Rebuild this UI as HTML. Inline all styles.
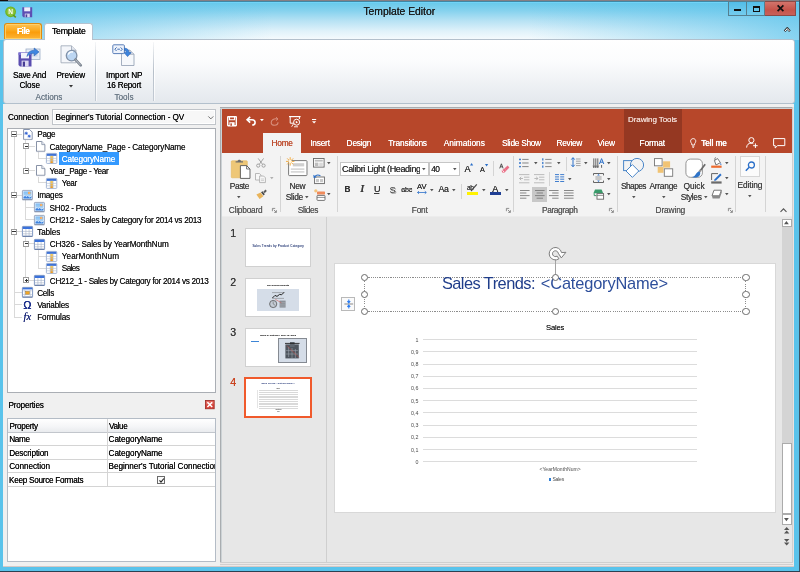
<!DOCTYPE html>
<html>
<head>
<meta charset="utf-8">
<title>Template Editor</title>
<style>
*{box-sizing:border-box;margin:0;padding:0}
html,body{width:800px;height:572px;overflow:hidden}
body{position:relative;font-family:"Liberation Sans",sans-serif;font-size:8.6px;color:#1e1e1e;background:#5ac3eb}
.a{position:absolute}
.t{position:absolute;white-space:pre;text-shadow:0 0 0.6px}
svg{overflow:visible}
#root{position:absolute;left:0;top:0;width:800px;height:572px;will-change:transform}
</style>
</head>
<body>
<div id="root">
<div class="a" style="left:0px;top:0px;width:800px;height:40px;background:linear-gradient(90deg,rgba(90,195,235,0.7) 0,rgba(90,195,235,0.45) 10%,rgba(90,195,235,0) 34%,rgba(90,195,235,0) 66%,rgba(90,195,235,0.45) 90%,rgba(90,195,235,0.7) 100%),linear-gradient(#66c8eb 0,#6acaeb 8%,#86d2ee 27%,#b7e2f4 52%,#e0f2fa 78%,#f4fafd 97%)"></div>
<div class="a" style="left:0px;top:0px;width:800px;height:1px;background:#857f84"></div>
<div class="a" style="left:0px;top:1px;width:800px;height:0.8px;background:#3f88a6"></div>
<div class="a" style="left:0px;top:1.8px;width:800px;height:1px;background:#70d4f8"></div>
<div class="a" style="left:0px;top:0px;width:8px;height:1px;background:#1a0c08"></div>
<div class="t" style="left:363.4px;top:5px;font-size:10.4px;line-height:14px;letter-spacing:-0.031px;color:#1b1b1b;">Template Editor</div>
<div class="a" style="left:727.5px;top:0.5px;width:19.5px;height:15px;border:1px solid #557f90;background:linear-gradient(#52bde8,#74ccee)"></div>
<div class="a" style="left:746px;top:0.5px;width:19px;height:15px;border:1px solid #557f90;background:linear-gradient(#52bde8,#74ccee)"></div>
<div class="a" style="left:764.5px;top:0.5px;width:31px;height:15px;border:1px solid #8c4a46;border-left:0;background:linear-gradient(#d2746b,#c6544b 60%,#c9605a)"></div>
<div class="a" style="left:734px;top:8.5px;width:7px;height:2px;background:#111"></div>
<div class="a" style="left:752.5px;top:5.5px;width:7px;height:6px;border:1.2px solid #111;border-top-width:2px"></div>
<svg class="a" style="left:776.5px;top:5px" width="7" height="6.4" viewBox="0 0 7 6.4"><path d="M0.6 0.3L6.4 6.1M6.4 0.3L0.6 6.1" stroke="#111" stroke-width="1.7" fill="none"/></svg>
<svg class="a" style="left:783.5px;top:27px" width="6.5" height="5.5" viewBox="0 0 6.5 5.5"><path d="M0.6 4.3L3.25 1.2L5.9 4.3" stroke="#333" stroke-width="2.2" fill="none" stroke-linejoin="round"/><path d="M1 4.1L3.25 1.6L5.5 4.1" stroke="#fff" stroke-width="1" fill="none"/></svg>
<svg class="a" style="left:5px;top:5.5px" width="12" height="12" viewBox="0 0 12 12"><circle cx="5.6" cy="5.8" r="5.4" fill="#6fb31f"/><circle cx="5.6" cy="5.8" r="4.2" fill="#8ac43a"/><path d="M8.2 9.2L10.8 11.4" stroke="#5e9a1a" stroke-width="1.6"/><text x="5.6" y="8.3" font-size="6.6" font-weight="bold" fill="#fff" text-anchor="middle" font-family="Liberation Sans, sans-serif">N</text></svg>
<svg class="a" style="left:22.4px;top:6.6px" width="10.5" height="10.5" viewBox="0 0 10.5 10.5"><path d="M0.3 0.3H10.2V10.2H1.4L0.3 9.1Z" fill="#5d4fb3"/><rect x="2.2" y="0.3" width="6" height="4" fill="#efeefa"/><rect x="2.8" y="6.6" width="5" height="3.6" fill="#d9d6f0"/><rect x="3.6" y="7.4" width="1.6" height="2.8" fill="#4a3f98"/></svg>
<div class="a" style="left:4.3px;top:23.2px;width:37.4px;height:15.6px;border:1px solid #e08c0e;border-bottom:0;border-radius:3px 3px 0 0;background:linear-gradient(#fdc252 0,#fbab22 40%,#fa9d0c 55%,#fcb436 100%);box-shadow:inset 0 0 0 1px rgba(255,215,120,0.75)"></div>
<div class="t" style="left:17px;top:25.7px;font-size:8.4px;line-height:11px;letter-spacing:-0.518px;color:#fff;font-weight:bold;">File</div>
<div class="a" style="left:44.2px;top:23.4px;width:49.2px;height:16.6px;border:1px solid #b4c3d1;border-bottom:0;border-radius:3px 3px 0 0;background:#fff"></div>
<div class="t" style="left:51.9px;top:26px;font-size:8.8px;line-height:11px;letter-spacing:-0.251px;color:#0c0c0c;">Template</div>
<div class="a" style="left:3px;top:38.5px;width:792.2px;height:65.9px;border:1px solid #b3c0cc;border-radius:3px;background:linear-gradient(#ffffff 0,#fbfcfd 35%,#eef1f4 70%,#e4e8ed 100%)"></div>
<div class="a" style="left:45.2px;top:38.2px;width:47.2px;height:1.6px;background:#fff"></div>
<div class="a" style="left:95px;top:42px;width:1px;height:59px;background:linear-gradient(rgba(170,180,192,0.1),#b6bfc9 50%,rgba(170,180,192,0.6))"></div>
<div class="a" style="left:96px;top:42px;width:1px;height:59px;background:linear-gradient(rgba(255,255,255,0.2),#fff 50%,rgba(255,255,255,0.6))"></div>
<div class="a" style="left:153px;top:42px;width:1px;height:59px;background:linear-gradient(rgba(170,180,192,0.1),#b6bfc9 50%,rgba(170,180,192,0.6))"></div>
<div class="a" style="left:154px;top:42px;width:1px;height:59px;background:linear-gradient(rgba(255,255,255,0.2),#fff 50%,rgba(255,255,255,0.6))"></div>
<div class="t" style="left:13px;top:69.5px;font-size:8.2px;line-height:11px;letter-spacing:-0.263px;color:#0c0c0c;">Save And</div>
<div class="t" style="left:19.5px;top:79.8px;font-size:8.2px;line-height:11px;letter-spacing:-0.093px;color:#0c0c0c;">Close</div>
<div class="t" style="left:56.5px;top:69.5px;font-size:8.2px;line-height:11px;letter-spacing:-0.095px;color:#0c0c0c;">Preview</div>
<svg class="a" style="left:68.7px;top:84.6px" width="4" height="2.4" viewBox="0 0 4 2.4"><path d="M0 0H4L2 2.4Z" fill="#333"/></svg>
<div class="t" style="left:106px;top:69.5px;font-size:8.2px;line-height:11px;letter-spacing:-0.045px;color:#0c0c0c;">Import NP</div>
<div class="t" style="left:107px;top:79.8px;font-size:8.2px;line-height:11px;letter-spacing:-0.224px;color:#0c0c0c;">16 Report</div>
<div class="t" style="left:35.5px;top:91.8px;font-size:8.2px;line-height:11px;letter-spacing:0.016px;color:#6d7b88;">Actions</div>
<div class="t" style="left:114.5px;top:91.8px;font-size:8.2px;line-height:11px;letter-spacing:-0.029px;color:#6d7b88;">Tools</div>
<svg class="a" style="left:18px;top:46.5px" width="23" height="20" viewBox="0 0 23 20"><rect x="8" y="2" width="14" height="10.5" fill="#e9edf5" stroke="#9fb0c8" stroke-width="0.8"/>
<rect x="10.5" y="4.5" width="9" height="5" fill="#c9d6ea"/>
<path d="M0.5 5.5H13.5V19.5H2L0.5 18Z" fill="#5a4db0"/>
<path d="M0.5 5.5H13.5V8H0.5Z" fill="#7a6fd0"/>
<rect x="3" y="5.8" width="8" height="5.6" fill="#f4f3fb"/>
<rect x="3.6" y="13.6" width="7" height="5.9" fill="#dcd9f1"/>
<rect x="4.8" y="14.6" width="2.2" height="4.9" fill="#463b94"/>
<path d="M9 9.5C9.5 5 13 3.2 16.2 3.4V1L21 4.9L16.2 8.8V6.4C13.5 6.2 10.8 7 9 9.5Z" fill="#3f86e0" stroke="#2a62b4" stroke-width="0.6"/></svg>
<svg class="a" style="left:60px;top:44.5px" width="23" height="23" viewBox="0 0 23 23"><path d="M1 0.8H11.5L16 5.3V17.8H1Z" fill="#f4f6fa" stroke="#9aa4b4" stroke-width="0.8"/>
<path d="M11.5 0.8V5.3H16" fill="#e2e6ee" stroke="#9aa4b4" stroke-width="0.8"/>
<circle cx="11.6" cy="10.6" r="5.3" fill="#bcd6f2" stroke="#8091a8" stroke-width="1.3"/>
<path d="M8.3 9.6C9 7.6 11 6.6 13 7" stroke="#fff" stroke-width="1.3" fill="none"/>
<path d="M15.4 14.6L20.8 20.4" stroke="#77808c" stroke-width="2.6" stroke-linecap="round"/>
<path d="M15.6 14.8L20.4 20" stroke="#c9ced6" stroke-width="0.9" stroke-linecap="round"/></svg>
<svg class="a" style="left:112px;top:43.5px" width="23" height="23" viewBox="0 0 23 23"><path d="M9.5 6.2H18L22 10.2V21.5H9.5Z" fill="#f6f8fb" stroke="#8e9cb0" stroke-width="0.8"/>
<path d="M18 6.2V10.2H22" fill="#dfe5ee" stroke="#8e9cb0" stroke-width="0.8"/>
<rect x="0.8" y="0.8" width="11.6" height="8.8" rx="1" fill="#eef3fb" stroke="#5b7fb9" stroke-width="1"/>
<path d="M4.6 3.4L2.8 5.2L4.6 7M8.6 3.4L10.4 5.2L8.6 7M5.3 5.2H7.9" stroke="#2f5fa8" stroke-width="0.9" fill="none"/>
<path d="M12.6 4.2C15.4 4.2 17 6 17 8.6H19.2L15.6 12.6L12 8.6H14.2C14.2 7.2 13.6 6.6 12.6 6.6Z" fill="#3c84dd" stroke="#2861b2" stroke-width="0.6"/></svg>
<div class="a" style="left:3.3px;top:104px;width:791px;height:462.5px;background:#f0f0f0"></div>
<div class="t" style="left:8px;top:111.5px;font-size:8.2px;line-height:11px;letter-spacing:-0.069px;color:#0c0c0c;">Connection</div>
<div class="a" style="left:52.4px;top:109.2px;width:163.5px;height:15.4px;background:#f7f7f7;border:1px solid #c0c4c9;box-shadow:inset 0 0 0 1px #fff"></div>
<div class="t" style="left:55.5px;top:111.5px;font-size:8.2px;line-height:11px;letter-spacing:-0.045px;color:#0c0c0c;">Beginner's Tutorial Connection - QV</div>
<svg class="a" style="left:207.8px;top:115.8px" width="5.6" height="3.4" viewBox="0 0 5.6 3.4"><path d="M0.3 0.4L2.8 2.9L5.3 0.4" stroke="#606060" stroke-width="0.9" fill="none"/></svg>
<div class="a" style="left:6.5px;top:127.5px;width:209.4px;height:265.8px;background:#fff;border:1px solid #aaaeb4"></div>
<div class="a" style="left:13.6px;top:134.2px;width:1px;height:182.85px;background:#d9d9d9"></div>
<div class="a" style="left:13.6px;top:133.7px;width:8.4px;height:1px;background:#d9d9d9"></div>
<div class="a" style="left:13.6px;top:194.65px;width:8.4px;height:1px;background:#d9d9d9"></div>
<div class="a" style="left:13.6px;top:231.22px;width:8.4px;height:1px;background:#d9d9d9"></div>
<div class="a" style="left:13.6px;top:292.17px;width:8.4px;height:1px;background:#d9d9d9"></div>
<div class="a" style="left:13.6px;top:304.36px;width:8.4px;height:1px;background:#d9d9d9"></div>
<div class="a" style="left:13.6px;top:316.55px;width:8.4px;height:1px;background:#d9d9d9"></div>
<div class="a" style="left:25px;top:139.2px;width:1px;height:31.57px;background:#d9d9d9"></div>
<div class="a" style="left:25px;top:145.89px;width:10px;height:1px;background:#d9d9d9"></div>
<div class="a" style="left:25px;top:170.27px;width:10px;height:1px;background:#d9d9d9"></div>
<div class="a" style="left:38px;top:152.39px;width:1px;height:6.19px;background:#d9d9d9"></div>
<div class="a" style="left:38px;top:158.08px;width:8.5px;height:1px;background:#d9d9d9"></div>
<div class="a" style="left:38px;top:176.77px;width:1px;height:6.19px;background:#d9d9d9"></div>
<div class="a" style="left:38px;top:182.46px;width:8.5px;height:1px;background:#d9d9d9"></div>
<div class="a" style="left:25px;top:200.15px;width:1px;height:19.38px;background:#d9d9d9"></div>
<div class="a" style="left:25px;top:206.84px;width:10px;height:1px;background:#d9d9d9"></div>
<div class="a" style="left:25px;top:219.03px;width:10px;height:1px;background:#d9d9d9"></div>
<div class="a" style="left:25px;top:236.72px;width:1px;height:43.76px;background:#d9d9d9"></div>
<div class="a" style="left:25px;top:243.41px;width:10px;height:1px;background:#d9d9d9"></div>
<div class="a" style="left:25px;top:279.98px;width:10px;height:1px;background:#d9d9d9"></div>
<div class="a" style="left:38px;top:249.91px;width:1px;height:18.38px;background:#d9d9d9"></div>
<div class="a" style="left:38px;top:255.6px;width:8.5px;height:1px;background:#d9d9d9"></div>
<div class="a" style="left:38px;top:267.79px;width:8.5px;height:1px;background:#d9d9d9"></div>
<div class="a" style="left:59px;top:152.38px;width:59.5px;height:12.4px;background:#3399ff"></div>
<div class="a" style="left:11.05px;top:131.2px;width:6px;height:6px;background:#fff;border:1px solid #9c9c9c"></div>
<div class="a" style="left:12.35px;top:133.75px;width:3.4px;height:0.9px;background:#333"></div>
<svg class="a" style="left:23.2px;top:128.8px" width="9.8" height="11" viewBox="0 0 9.8 11"><path d="M0.6 0.5H6.6L9.2 3.1V10.4H0.6Z" fill="#fff" stroke="#7a89a6" stroke-width="0.9"/><path d="M0.8 10.6H9.2" stroke="#b0b8c8" stroke-width="0.6"/><path d="M3.2 2.6V6M1.5 4.3H4.9M2 3.1L4.4 5.5M4.4 3.1L2 5.5" stroke="#2458d0" stroke-width="0.7"/><path d="M6.2 5.6V8.8M4.6 7.2H7.8M5.1 6.1L7.3 8.3M7.3 6.1L5.1 8.3" stroke="#2458d0" stroke-width="0.7"/></svg>
<div class="t" style="left:37.2px;top:129.4px;font-size:8.2px;line-height:11px;letter-spacing:-0.263px;color:#1e1e1e;">Page</div>
<div class="a" style="left:23.2px;top:143.39px;width:6px;height:6px;background:#fff;border:1px solid #9c9c9c"></div>
<div class="a" style="left:24.5px;top:145.94px;width:3.4px;height:0.9px;background:#333"></div>
<svg class="a" style="left:35.8px;top:140.79px" width="9.4" height="11" viewBox="0 0 9.4 11"><path d="M0.5 0.5H5.8L8.9 3.6V10.3H0.5Z" fill="#fff" stroke="#7a869c" stroke-width="0.9"/><path d="M5.8 0.5V3.6H8.9" fill="#e4e8f0" stroke="#7a869c" stroke-width="0.7"/><path d="M0.6 10.7H8.9" stroke="#b8c0cc" stroke-width="0.6"/></svg>
<div class="t" style="left:49.6px;top:141.59px;font-size:8.2px;line-height:11px;letter-spacing:-0.165px;color:#1e1e1e;">CategoryName_Page - CategoryName</div>
<svg class="a" style="left:46.4px;top:153.28px" width="11.2" height="10.8" viewBox="0 0 11.2 10.8"><defs><linearGradient id="gcol" x1="0" y1="0" x2="0" y2="1"><stop offset="0" stop-color="#f8d060"/><stop offset="1" stop-color="#f0981a"/></linearGradient></defs><rect x="0.4" y="0.4" width="10.4" height="10" rx="0.8" fill="#fff" stroke="#8fa3c8" stroke-width="0.8"/><path d="M0.8 0.8H10.4V2.9H0.8Z" fill="#3f73d6"/><rect x="4.2" y="2.9" width="2.9" height="7.2" fill="url(#gcol)"/><path d="M4.2 2.9V10.2M7.1 2.9V10.2M0.8 5.4H10.4M0.8 7.8H10.4" stroke="#b4bed0" stroke-width="0.6" fill="none"/></svg>
<div class="t" style="left:61.8px;top:153.78px;font-size:8.2px;line-height:11px;letter-spacing:-0.146px;color:#fff;">CategoryName</div>
<div class="a" style="left:23.2px;top:167.77px;width:6px;height:6px;background:#fff;border:1px solid #9c9c9c"></div>
<div class="a" style="left:24.5px;top:170.32px;width:3.4px;height:0.9px;background:#333"></div>
<svg class="a" style="left:35.8px;top:165.17px" width="9.4" height="11" viewBox="0 0 9.4 11"><path d="M0.5 0.5H5.8L8.9 3.6V10.3H0.5Z" fill="#fff" stroke="#7a869c" stroke-width="0.9"/><path d="M5.8 0.5V3.6H8.9" fill="#e4e8f0" stroke="#7a869c" stroke-width="0.7"/><path d="M0.6 10.7H8.9" stroke="#b8c0cc" stroke-width="0.6"/></svg>
<div class="t" style="left:49.6px;top:165.97px;font-size:8.2px;line-height:11px;letter-spacing:-0.312px;color:#1e1e1e;">Year_Page - Year</div>
<svg class="a" style="left:46.4px;top:177.66px" width="11.2" height="10.8" viewBox="0 0 11.2 10.8"><defs><linearGradient id="gcol" x1="0" y1="0" x2="0" y2="1"><stop offset="0" stop-color="#f8d060"/><stop offset="1" stop-color="#f0981a"/></linearGradient></defs><rect x="0.4" y="0.4" width="10.4" height="10" rx="0.8" fill="#fff" stroke="#8fa3c8" stroke-width="0.8"/><path d="M0.8 0.8H10.4V2.9H0.8Z" fill="#3f73d6"/><rect x="4.2" y="2.9" width="2.9" height="7.2" fill="url(#gcol)"/><path d="M4.2 2.9V10.2M7.1 2.9V10.2M0.8 5.4H10.4M0.8 7.8H10.4" stroke="#b4bed0" stroke-width="0.6" fill="none"/></svg>
<div class="t" style="left:61.8px;top:178.16px;font-size:8.2px;line-height:11px;letter-spacing:-0.342px;color:#1e1e1e;">Year</div>
<div class="a" style="left:11.05px;top:192.15px;width:6px;height:6px;background:#fff;border:1px solid #9c9c9c"></div>
<div class="a" style="left:12.35px;top:194.7px;width:3.4px;height:0.9px;background:#333"></div>
<svg class="a" style="left:21.9px;top:190.15px" width="10.8" height="10.2" viewBox="0 0 10.8 10.2"><defs><linearGradient id="gsky" x1="0" y1="0" x2="0" y2="1"><stop offset="0" stop-color="#7fbcf2"/><stop offset="1" stop-color="#c4e2fa"/></linearGradient></defs><rect x="0.4" y="0.4" width="10" height="9.2" rx="0.6" fill="#f2f6fb" stroke="#8796b2" stroke-width="0.8"/><path d="M0.4 9.8H10.4" stroke="#6f7f9e" stroke-width="0.7"/><rect x="1.4" y="1.4" width="8" height="7.2" fill="url(#gsky)"/><circle cx="7.2" cy="3" r="1.3" fill="#f7a04a"/><circle cx="7.2" cy="3" r="0.6" fill="#fde3b8"/><path d="M1.4 7L3 5.4L4.4 6.8L5.8 5.6L7.4 7.2L9.4 6V8.6H1.4Z" fill="#3c82e0"/><path d="M1.4 7L3 5.4L4.4 6.8L5.8 5.6L7.4 7.2L9.4 6" fill="none" stroke="#fff" stroke-width="0.6"/></svg>
<div class="t" style="left:37.2px;top:190.35px;font-size:8.2px;line-height:11px;letter-spacing:-0.248px;color:#1e1e1e;">Images</div>
<svg class="a" style="left:34.1px;top:202.34px" width="10.8" height="10.2" viewBox="0 0 10.8 10.2"><defs><linearGradient id="gsky" x1="0" y1="0" x2="0" y2="1"><stop offset="0" stop-color="#7fbcf2"/><stop offset="1" stop-color="#c4e2fa"/></linearGradient></defs><rect x="0.4" y="0.4" width="10" height="9.2" rx="0.6" fill="#f2f6fb" stroke="#8796b2" stroke-width="0.8"/><path d="M0.4 9.8H10.4" stroke="#6f7f9e" stroke-width="0.7"/><rect x="1.4" y="1.4" width="8" height="7.2" fill="url(#gsky)"/><circle cx="7.2" cy="3" r="1.3" fill="#f7a04a"/><circle cx="7.2" cy="3" r="0.6" fill="#fde3b8"/><path d="M1.4 7L3 5.4L4.4 6.8L5.8 5.6L7.4 7.2L9.4 6V8.6H1.4Z" fill="#3c82e0"/><path d="M1.4 7L3 5.4L4.4 6.8L5.8 5.6L7.4 7.2L9.4 6" fill="none" stroke="#fff" stroke-width="0.6"/></svg>
<div class="t" style="left:49.6px;top:202.54px;font-size:8.2px;line-height:11px;letter-spacing:-0.211px;color:#1e1e1e;">SH02 - Products</div>
<svg class="a" style="left:34.1px;top:214.53px" width="10.8" height="10.2" viewBox="0 0 10.8 10.2"><defs><linearGradient id="gsky" x1="0" y1="0" x2="0" y2="1"><stop offset="0" stop-color="#7fbcf2"/><stop offset="1" stop-color="#c4e2fa"/></linearGradient></defs><rect x="0.4" y="0.4" width="10" height="9.2" rx="0.6" fill="#f2f6fb" stroke="#8796b2" stroke-width="0.8"/><path d="M0.4 9.8H10.4" stroke="#6f7f9e" stroke-width="0.7"/><rect x="1.4" y="1.4" width="8" height="7.2" fill="url(#gsky)"/><circle cx="7.2" cy="3" r="1.3" fill="#f7a04a"/><circle cx="7.2" cy="3" r="0.6" fill="#fde3b8"/><path d="M1.4 7L3 5.4L4.4 6.8L5.8 5.6L7.4 7.2L9.4 6V8.6H1.4Z" fill="#3c82e0"/><path d="M1.4 7L3 5.4L4.4 6.8L5.8 5.6L7.4 7.2L9.4 6" fill="none" stroke="#fff" stroke-width="0.6"/></svg>
<div class="t" style="left:49.6px;top:214.73px;font-size:8.2px;line-height:11px;letter-spacing:-0.266px;color:#1e1e1e;">CH212 - Sales by Category for 2014 vs 2013</div>
<div class="a" style="left:11.05px;top:228.72px;width:6px;height:6px;background:#fff;border:1px solid #9c9c9c"></div>
<div class="a" style="left:12.35px;top:231.27px;width:3.4px;height:0.9px;background:#333"></div>
<svg class="a" style="left:22.1px;top:226.42px" width="11" height="10.8" viewBox="0 0 11 10.8"><rect x="0.4" y="0.4" width="10.2" height="9.8" rx="0.6" fill="#fff" stroke="#5f7db4" stroke-width="0.8"/><path d="M0.4 10.4H10.6" stroke="#4a628f" stroke-width="0.7"/><rect x="0.8" y="0.8" width="9.4" height="2.2" fill="#3b72dc"/><path d="M3.9 3V10M7.1 3V10M0.8 5.4H10.2M0.8 7.8H10.2" stroke="#a2aec6" stroke-width="0.6" fill="none"/></svg>
<div class="t" style="left:37.2px;top:226.92px;font-size:8.2px;line-height:11px;letter-spacing:-0.117px;color:#1e1e1e;">Tables</div>
<div class="a" style="left:23.2px;top:240.91px;width:6px;height:6px;background:#fff;border:1px solid #9c9c9c"></div>
<div class="a" style="left:24.5px;top:243.46px;width:3.4px;height:0.9px;background:#333"></div>
<svg class="a" style="left:34.3px;top:238.61px" width="11" height="10.8" viewBox="0 0 11 10.8"><rect x="0.4" y="0.4" width="10.2" height="9.8" rx="0.6" fill="#fff" stroke="#5f7db4" stroke-width="0.8"/><path d="M0.4 10.4H10.6" stroke="#4a628f" stroke-width="0.7"/><rect x="0.8" y="0.8" width="9.4" height="2.2" fill="#3b72dc"/><path d="M3.9 3V10M7.1 3V10M0.8 5.4H10.2M0.8 7.8H10.2" stroke="#a2aec6" stroke-width="0.6" fill="none"/></svg>
<div class="t" style="left:49.8px;top:239.11px;font-size:8.2px;line-height:11px;letter-spacing:-0.140px;color:#1e1e1e;">CH326 - Sales by YearMonthNum</div>
<svg class="a" style="left:46.4px;top:250.8px" width="11.2" height="10.8" viewBox="0 0 11.2 10.8"><defs><linearGradient id="gcol" x1="0" y1="0" x2="0" y2="1"><stop offset="0" stop-color="#f8d060"/><stop offset="1" stop-color="#f0981a"/></linearGradient></defs><rect x="0.4" y="0.4" width="10.4" height="10" rx="0.8" fill="#fff" stroke="#8fa3c8" stroke-width="0.8"/><path d="M0.8 0.8H10.4V2.9H0.8Z" fill="#3f73d6"/><rect x="4.2" y="2.9" width="2.9" height="7.2" fill="url(#gcol)"/><path d="M4.2 2.9V10.2M7.1 2.9V10.2M0.8 5.4H10.4M0.8 7.8H10.4" stroke="#b4bed0" stroke-width="0.6" fill="none"/></svg>
<div class="t" style="left:61.8px;top:251.3px;font-size:8.2px;line-height:11px;letter-spacing:0.061px;color:#1e1e1e;">YearMonthNum</div>
<svg class="a" style="left:46.4px;top:262.99px" width="11.2" height="10.8" viewBox="0 0 11.2 10.8"><defs><linearGradient id="gcol" x1="0" y1="0" x2="0" y2="1"><stop offset="0" stop-color="#f8d060"/><stop offset="1" stop-color="#f0981a"/></linearGradient></defs><rect x="0.4" y="0.4" width="10.4" height="10" rx="0.8" fill="#fff" stroke="#8fa3c8" stroke-width="0.8"/><path d="M0.8 0.8H10.4V2.9H0.8Z" fill="#3f73d6"/><rect x="4.2" y="2.9" width="2.9" height="7.2" fill="url(#gcol)"/><path d="M4.2 2.9V10.2M7.1 2.9V10.2M0.8 5.4H10.4M0.8 7.8H10.4" stroke="#b4bed0" stroke-width="0.6" fill="none"/></svg>
<div class="t" style="left:61.8px;top:263.49px;font-size:8.2px;line-height:11px;letter-spacing:-0.623px;color:#1e1e1e;">Sales</div>
<div class="a" style="left:23.2px;top:277.48px;width:6px;height:6px;background:#fff;border:1px solid #9c9c9c"></div>
<div class="a" style="left:24.5px;top:280.03px;width:3.4px;height:0.9px;background:#333"></div>
<div class="a" style="left:25.75px;top:278.78px;width:0.9px;height:3.4px;background:#333"></div>
<svg class="a" style="left:34.3px;top:275.18px" width="11" height="10.8" viewBox="0 0 11 10.8"><rect x="0.4" y="0.4" width="10.2" height="9.8" rx="0.6" fill="#fff" stroke="#5f7db4" stroke-width="0.8"/><path d="M0.4 10.4H10.6" stroke="#4a628f" stroke-width="0.7"/><rect x="0.8" y="0.8" width="9.4" height="2.2" fill="#3b72dc"/><path d="M3.9 3V10M7.1 3V10M0.8 5.4H10.2M0.8 7.8H10.2" stroke="#a2aec6" stroke-width="0.6" fill="none"/></svg>
<div class="t" style="left:49.8px;top:275.68px;font-size:8.2px;line-height:11px;letter-spacing:-0.302px;color:#1e1e1e;">CH212_1 - Sales by Category for 2014 vs 2013</div>
<svg class="a" style="left:22.1px;top:287.47px" width="11" height="10.6" viewBox="0 0 11 10.6"><rect x="0.4" y="0.4" width="10.2" height="9.6" rx="0.6" fill="#fff" stroke="#5f7db4" stroke-width="0.8"/><path d="M0.4 10.2H10.6" stroke="#4a628f" stroke-width="0.7"/><rect x="0.8" y="0.8" width="9.4" height="1.6" fill="#3b72dc"/><path d="M0.8 3.8H10.2M0.8 7.6H10.2M2.8 2.4V10M8.2 2.4V10" stroke="#b4bed0" stroke-width="0.6"/><rect x="3.6" y="4.4" width="3.8" height="2.8" fill="#f5a623" stroke="#9a7a3a" stroke-width="0.5"/></svg>
<div class="t" style="left:37.2px;top:287.87px;font-size:8.2px;line-height:11px;letter-spacing:-0.285px;color:#1e1e1e;">Cells</div>
<div class="t" style="left:37.2px;top:300.06px;font-size:8.2px;line-height:11px;letter-spacing:-0.198px;color:#1e1e1e;">Variables</div>
<div class="t" style="left:37.2px;top:312.25px;font-size:8.2px;line-height:11px;letter-spacing:-0.172px;color:#1e1e1e;">Formulas</div>
<div class="t" style="left:23.2px;top:298.06px;font-size:10.8px;line-height:14px;letter-spacing:0.126px;color:#1c2f8c;text-shadow:0 0 0.5px,0.3px 0 0;">Ω</div>
<div class="t" style="left:23.4px;top:309.85px;font-size:10.6px;line-height:14px;letter-spacing:0.178px;color:#1c2a7a;font-style:italic;font-family:'Liberation Serif',serif;">fx</div>
<div class="t" style="left:8.4px;top:399.5px;font-size:8.2px;line-height:11px;letter-spacing:-0.197px;color:#0c0c0c;">Properties</div>
<svg class="a" style="left:205.2px;top:399.6px" width="9.6" height="9.2" viewBox="0 0 9.6 9.2"><rect x="0.4" y="0.4" width="8.8" height="8.4" fill="#d8453c" stroke="#9b2a24" stroke-width="0.8"/><rect x="1" y="1" width="7.6" height="3.4" fill="#e8786f" opacity="0.7"/><path d="M2.4 2.2L7.2 7M7.2 2.2L2.4 7" stroke="#fff" stroke-width="1.5"/></svg>
<div class="a" style="left:7px;top:418px;width:209px;height:144px;background:#fff;border:1px solid #b4bcc6"></div>
<div class="a" style="left:7.8px;top:418.8px;width:207.4px;height:13px;background:linear-gradient(#ffffff,#f4f5f7 60%,#e9ebee)"></div>
<div class="a" style="left:7.8px;top:431.5px;width:207.4px;height:1px;background:#c2c6cc"></div>
<div class="a" style="left:7.8px;top:445.1px;width:207.4px;height:1px;background:#d4d4d4"></div>
<div class="a" style="left:7.8px;top:458.7px;width:207.4px;height:1px;background:#d4d4d4"></div>
<div class="a" style="left:7.8px;top:472.3px;width:207.4px;height:1px;background:#d4d4d4"></div>
<div class="a" style="left:7.8px;top:485.9px;width:207.4px;height:1px;background:#d4d4d4"></div>
<div class="a" style="left:106.6px;top:418.8px;width:1px;height:67.6px;background:#d4d4d4"></div>
<div class="t" style="left:9.6px;top:420.8px;font-size:8.2px;line-height:11px;letter-spacing:-0.349px;color:#0c0c0c;">Property</div>
<div class="t" style="left:109px;top:420.8px;font-size:8.2px;line-height:11px;letter-spacing:-0.393px;color:#0c0c0c;">Value</div>
<div class="t" style="left:9.2px;top:434.1px;font-size:8.2px;line-height:11px;letter-spacing:-0.319px;color:#0c0c0c;">Name</div>
<div class="t" style="left:108.6px;top:434.1px;font-size:8.2px;line-height:11px;letter-spacing:-0.096px;color:#0c0c0c;">CategoryName</div>
<div class="t" style="left:9.2px;top:447.6px;font-size:8.2px;line-height:11px;letter-spacing:-0.147px;color:#0c0c0c;">Description</div>
<div class="t" style="left:108.6px;top:447.6px;font-size:8.2px;line-height:11px;letter-spacing:-0.096px;color:#0c0c0c;">CategoryName</div>
<div class="t" style="left:9.2px;top:461.2px;font-size:8.2px;line-height:11px;letter-spacing:-0.069px;color:#0c0c0c;">Connection</div>
<div class="a" style="left:107.6px;top:459.8px;width:107.6px;height:12.6px;overflow:hidden">
<div class="t" style="left:1px;top:1.4px;font-size:8.2px;line-height:11px;letter-spacing:-0.044px;color:#0c0c0c;">Beginner's Tutorial Connection</div>
</div>
<div class="t" style="left:9px;top:474.9px;font-size:8.2px;line-height:11px;letter-spacing:-0.282px;color:#0c0c0c;">Keep Source Formats</div>
<div class="a" style="left:157px;top:476.2px;width:8.4px;height:7.6px;background:#fafafa;border:1px solid #6a6a6a"></div>
<svg class="a" style="left:158.6px;top:477.6px" width="5.4" height="4.8" viewBox="0 0 5.4 4.8"><path d="M0.5 2.4L2 4.2L4.9 0.5" stroke="#222" stroke-width="1.1" fill="none"/></svg>
<div class="a" style="left:220px;top:107px;width:572.1px;height:455px;background:#e7e7e7"></div>
<div class="a" style="left:220px;top:107px;width:2.1px;height:455px;background:#ccd2d5"></div>
<div class="a" style="left:220px;top:107px;width:0.7px;height:455px;background:#a9adb0"></div>
<div class="a" style="left:220px;top:107px;width:572.1px;height:2px;background:#ccd2d5"></div>
<div class="a" style="left:220px;top:107px;width:572.1px;height:0.6px;background:#a9adb0"></div>
<div class="a" style="left:222.1px;top:109.3px;width:570.2px;height:43.9px;background:#b7472a"></div>
<div class="a" style="left:623.8px;top:109.3px;width:58.4px;height:43.9px;background:#953822"></div>
<div class="a" style="left:222.1px;top:153px;width:570px;height:63px;background:#f3f3f3"></div>
<div class="a" style="left:222.1px;top:216px;width:570px;height:1.2px;background:#ececec"></div>
<div class="a" style="left:263.3px;top:132.8px;width:37.8px;height:21px;background:#f3f3f3"></div>
<svg class="a" style="left:226.9px;top:115.8px" width="10" height="10.4" viewBox="0 0 10 10.4"><rect x="0.7" y="0.7" width="8.6" height="9" rx="0.4" fill="none" stroke="#fff" stroke-width="1.4"/><path d="M2.5 0.8V3.7H7.5V0.8" fill="none" stroke="#fff" stroke-width="1.1"/><rect x="2.4" y="6.2" width="5.2" height="3.6" fill="#fff"/><rect x="3.4" y="7.4" width="1.5" height="2.4" fill="#b7472a"/></svg>
<svg class="a" style="left:246.3px;top:115.8px" width="10" height="9.6" viewBox="0 0 10 9.6"><path d="M4.2 0.8L1.1 3.7L4.2 6.6" fill="none" stroke="#fff" stroke-width="1.6"/><path d="M1.4 3.7H6C8 3.7 9.1 5 9.1 6.4C9.1 8 8 9 6.2 9" fill="none" stroke="#fff" stroke-width="1.6"/></svg>
<svg class="a" style="left:259.8px;top:119.4px" width="3.8" height="2.2" viewBox="0 0 3.8 2.2"><path d="M0 0H3.8L1.9 2.2Z" fill="#fff"/></svg>
<svg class="a" style="left:270.4px;top:115.8px" width="9.4" height="9.8" viewBox="0 0 9.4 9.8"><path d="M6 1.2L8 3L6 4.6" fill="none" stroke="#d8907d" stroke-width="1"/><path d="M7.6 3C4 2.2 1.2 4 1.2 6.4C1.2 8.2 2.6 9.2 4.6 9.2C6.6 9.2 8 8 8 6.2" fill="none" stroke="#d8907d" stroke-width="1.1"/></svg>
<svg class="a" style="left:288.8px;top:115.6px" width="11.6" height="11.6" viewBox="0 0 11.6 11.6"><path d="M0 0.6H11.6" stroke="#fff" stroke-width="1.2"/><path d="M1.2 1V7.2H5" fill="none" stroke="#fff" stroke-width="1"/><path d="M10.4 1V3" stroke="#fff" stroke-width="1"/><circle cx="7.6" cy="6.2" r="3" fill="none" stroke="#fff" stroke-width="1"/><path d="M6.8 4.8V7.6L9 6.2Z" fill="#fff"/><path d="M4.4 8L2.6 10.8M5 10.8H9" stroke="#fff" stroke-width="0.9"/></svg>
<svg class="a" style="left:311.8px;top:118.8px" width="4.2" height="4.6" viewBox="0 0 4.2 4.6"><path d="M0 0.5H4.2" stroke="#fff" stroke-width="1"/><path d="M0 2.2H4.2L2.1 4.6Z" fill="#fff"/></svg>
<div class="t" style="left:271.6px;top:137.8px;font-size:8.4px;line-height:11px;letter-spacing:-0.302px;color:#bd4a2b;">Home</div>
<div class="t" style="left:310.2px;top:137.8px;font-size:8.4px;line-height:11px;letter-spacing:-0.235px;color:#fff;">Insert</div>
<div class="t" style="left:346.6px;top:137.8px;font-size:8.4px;line-height:11px;letter-spacing:-0.258px;color:#fff;">Design</div>
<div class="t" style="left:388.2px;top:137.8px;font-size:8.4px;line-height:11px;letter-spacing:-0.179px;color:#fff;">Transitions</div>
<div class="t" style="left:443.8px;top:137.8px;font-size:8.4px;line-height:11px;letter-spacing:-0.035px;color:#fff;">Animations</div>
<div class="t" style="left:502px;top:137.8px;font-size:8.4px;line-height:11px;letter-spacing:-0.303px;color:#fff;">Slide Show</div>
<div class="t" style="left:556.6px;top:137.8px;font-size:8.4px;line-height:11px;letter-spacing:-0.357px;color:#fff;">Review</div>
<div class="t" style="left:597.6px;top:137.8px;font-size:8.4px;line-height:11px;letter-spacing:-0.164px;color:#fff;">View</div>
<div class="t" style="left:639.6px;top:137.8px;font-size:8.4px;line-height:11px;letter-spacing:-0.201px;color:#fff;">Format</div>
<div class="t" style="left:628px;top:115.4px;font-size:8px;line-height:10px;letter-spacing:-0.085px;color:#f1d9d2;">Drawing Tools</div>
<div class="t" style="left:701.2px;top:137.8px;font-size:8.4px;line-height:11px;letter-spacing:-0.115px;color:#fff;text-shadow:0 0 0.8px,0 0 0.4px;">Tell me</div>
<svg class="a" style="left:690px;top:137.6px" width="6.4" height="10" viewBox="0 0 6.4 10"><path d="M3.2 0.6C1.6 0.6 0.6 1.8 0.6 3.2C0.6 4.4 1.4 5 1.8 5.8V7H4.6V5.8C5 5 5.8 4.4 5.8 3.2C5.8 1.8 4.8 0.6 3.2 0.6Z" fill="none" stroke="#fff" stroke-width="0.9"/><path d="M2 8.2H4.4M2.4 9.4H4" stroke="#fff" stroke-width="0.8"/></svg>
<svg class="a" style="left:746px;top:137.4px" width="12.4" height="11.4" viewBox="0 0 12.4 11.4"><circle cx="5.4" cy="3.2" r="2.6" fill="none" stroke="#fff" stroke-width="1"/><path d="M0.6 10.6C0.8 7.6 2.6 6.2 5 6.2C6 6.2 6.8 6.4 7.4 6.8" fill="none" stroke="#fff" stroke-width="1"/><path d="M9.4 6.4V11M7.1 8.7H11.7" stroke="#fff" stroke-width="1"/></svg>
<svg class="a" style="left:773px;top:137.8px" width="12.4" height="11" viewBox="0 0 12.4 11"><path d="M0.6 0.6H11.8V7.6H4.6L2.2 10V7.6H0.6Z" fill="none" stroke="#fff" stroke-width="1"/></svg>
<div class="a" style="left:280.2px;top:156.4px;width:1px;height:56px;background:#d4d4d4"></div>
<div class="a" style="left:336.8px;top:156.4px;width:1px;height:56px;background:#d4d4d4"></div>
<div class="a" style="left:513.3px;top:156.4px;width:1px;height:56px;background:#d4d4d4"></div>
<div class="a" style="left:616.6px;top:156.4px;width:1px;height:56px;background:#d4d4d4"></div>
<div class="a" style="left:735.4px;top:156.4px;width:1px;height:56px;background:#d4d4d4"></div>
<div class="a" style="left:765.3px;top:156.4px;width:1px;height:56px;background:#d4d4d4"></div>
<div class="a" style="left:492.6px;top:161px;width:1px;height:15px;background:#d4d4d4"></div>
<div class="a" style="left:461.4px;top:184px;width:1px;height:15px;background:#d4d4d4"></div>
<div class="a" style="left:565.6px;top:156.5px;width:1px;height:14px;background:#d4d4d4"></div>
<div class="a" style="left:549.2px;top:171.5px;width:1px;height:14.5px;background:#d4d4d4"></div>
<svg class="a" style="left:231px;top:159.2px" width="19.4" height="19.8" viewBox="0 0 19.4 19.8"><rect x="0.3" y="1.8" width="16" height="17" rx="0.8" fill="#eec777"/>
<rect x="0.3" y="1.8" width="16" height="17" rx="0.8" fill="none" stroke="#e3b55a" stroke-width="0.6"/>
<path d="M4.6 3.6V2.2H6.6C6.6 0.2 10 0.2 10 2.2H12V3.6Z" fill="#6e6e6e"/>
<path d="M9.4 6.6H15.6L19 10V19.4H9.4Z" fill="#fff" stroke="#555" stroke-width="0.9"/>
<path d="M15.6 6.6V10H19" fill="none" stroke="#555" stroke-width="0.8"/></svg>
<div class="t" style="left:229.8px;top:181.1px;font-size:8.4px;line-height:11px;letter-spacing:-0.456px;color:#444;">Paste</div>
<svg class="a" style="left:236.8px;top:196.2px" width="3.6" height="2.2" viewBox="0 0 3.6 2.2"><path d="M0 0H3.6L1.8 2.2Z" fill="#555"/></svg>
<svg class="a" style="left:255.8px;top:158.2px" width="9.8" height="9.6" viewBox="0 0 9.8 9.6"><path d="M2.2 0.4L6.6 6.4M7.6 0.4L3.2 6.4" stroke="#9a9a9a" stroke-width="0.9" fill="none"/><circle cx="2.2" cy="7.6" r="1.6" fill="none" stroke="#9a9a9a" stroke-width="0.9"/><circle cx="7.6" cy="7.6" r="1.6" fill="none" stroke="#9a9a9a" stroke-width="0.9"/></svg>
<svg class="a" style="left:255px;top:173.2px" width="11" height="10" viewBox="0 0 11 10"><path d="M0.5 0.5H4.4L6 2.1V7H0.5Z" fill="#f7f7f7" stroke="#a8a8a8" stroke-width="0.8"/><path d="M4.6 3H8.6L10.4 4.8V9.6H4.6Z" fill="#f7f7f7" stroke="#a8a8a8" stroke-width="0.8"/><path d="M6 6H9M6 7.6H9" stroke="#b5b5b5" stroke-width="0.6"/></svg>
<svg class="a" style="left:269.7px;top:177.2px" width="3.6" height="2.2" viewBox="0 0 3.6 2.2"><path d="M0 0H3.6L1.8 2.2Z" fill="#b0b0b0"/></svg>
<svg class="a" style="left:255.8px;top:188.6px" width="11.2" height="10.4" viewBox="0 0 11.2 10.4"><path d="M0.4 5.6L4.6 3.4L7.4 7.2L3.6 10Z" fill="#e9b45b"/><path d="M5 3.2L6.6 2.2L8.8 5.2L7.6 6.4Z" fill="#4a4a4a"/><path d="M7.4 2.6L9.6 0.6L10.8 2L8.6 4.2Z" fill="#5a5a5a"/></svg>
<div class="t" style="left:228.8px;top:204.8px;font-size:8.4px;line-height:11px;letter-spacing:-0.240px;color:#5a5a5a;">Clipboard</div>
<svg class="a" style="left:272.2px;top:208.2px" width="4.8" height="4.8" viewBox="0 0 4.8 4.8"><path d="M0.4 3.2V0.4H3.2" fill="none" stroke="#777" stroke-width="0.8"/><path d="M1.8 1.8L4.2 4.2M4.4 2.2V4.4H2.2" fill="none" stroke="#777" stroke-width="0.8"/></svg>
<svg class="a" style="left:285.8px;top:156.8px" width="21.4" height="19.2" viewBox="0 0 21.4 19.2"><rect x="2.6" y="3.6" width="18.4" height="15" rx="0.8" fill="#fff" stroke="#6c6c6c" stroke-width="0.9"/>
<rect x="6.8" y="6.2" width="11.4" height="3.2" fill="#cfcfcf"/><rect x="4.8" y="11.4" width="13.6" height="1.4" fill="#cfcfcf"/><rect x="4.8" y="14.2" width="13.6" height="1.4" fill="#cfcfcf"/>
<path d="M4.2 0.2V8.6M0 4.4H8.4M1.2 1.4L7.2 7.4M7.2 1.4L1.2 7.4" stroke="#f2a531" stroke-width="0.9"/><circle cx="4.2" cy="4.4" r="1.6" fill="#fff6e0"/></svg>
<div class="t" style="left:289.6px;top:181.1px;font-size:8.4px;line-height:11px;letter-spacing:-0.402px;color:#444;">New</div>
<div class="t" style="left:285.8px;top:191.8px;font-size:8.4px;line-height:11px;letter-spacing:-0.296px;color:#444;">Slide</div>
<svg class="a" style="left:304.6px;top:196.4px" width="3.6" height="2.2" viewBox="0 0 3.6 2.2"><path d="M0 0H3.6L1.8 2.2Z" fill="#555"/></svg>
<svg class="a" style="left:313.2px;top:158.2px" width="11.6" height="9.6" viewBox="0 0 11.6 9.6"><rect x="0.5" y="0.5" width="10.6" height="8.6" fill="#fff" stroke="#666" stroke-width="0.9"/><rect x="1.8" y="1.8" width="8" height="1.8" fill="#bdbdbd"/><rect x="1.8" y="4.6" width="3.6" height="3.4" fill="#bdbdbd"/><rect x="6.2" y="4.6" width="3.6" height="3.4" fill="#d9d9d9"/></svg>
<svg class="a" style="left:326.8px;top:162.2px" width="3.6" height="2.2" viewBox="0 0 3.6 2.2"><path d="M0 0H3.6L1.8 2.2Z" fill="#555"/></svg>
<svg class="a" style="left:313px;top:173.6px" width="12" height="10" viewBox="0 0 12 10"><rect x="1.6" y="3" width="9.8" height="6.6" fill="#fff" stroke="#666" stroke-width="0.9"/><rect x="3" y="5" width="3" height="3.2" fill="#c9c9c9"/><rect x="7" y="5" width="3" height="3.2" fill="#c9c9c9"/><path d="M1 3.4C2 1 5 0.4 7.4 1.8" fill="none" stroke="#2a6fc9" stroke-width="1.1"/><path d="M0.2 0.8L0.8 4L3.8 3.2Z" fill="#2a6fc9"/></svg>
<svg class="a" style="left:313.6px;top:188.6px" width="12" height="11.8" viewBox="0 0 12 11.8"><rect x="3" y="2.4" width="8" height="3.2" rx="0.6" fill="#f08a5a"/><rect x="3" y="6.4" width="8" height="5" rx="0.8" fill="#fff" stroke="#666" stroke-width="0.9"/><path d="M3 8.4H11" stroke="#666" stroke-width="0.7"/><circle cx="1.8" cy="1.8" r="1.6" fill="#f4c27a"/></svg>
<svg class="a" style="left:326.8px;top:193.2px" width="3.6" height="2.2" viewBox="0 0 3.6 2.2"><path d="M0 0H3.6L1.8 2.2Z" fill="#555"/></svg>
<div class="t" style="left:297.8px;top:204.8px;font-size:8.4px;line-height:11px;letter-spacing:-0.447px;color:#5a5a5a;">Slides</div>
<div class="a" style="left:340px;top:161.6px;width:89px;height:14.6px;background:#fff;border:1px solid #c6c6c6"></div>
<div class="a" style="left:429.2px;top:161.6px;width:30.4px;height:14.6px;background:#fff;border:1px solid #c6c6c6"></div>
<div class="a" style="left:341px;top:162.4px;width:78.6px;height:13px;overflow:hidden">
<div class="t" style="left:1px;top:0.6px;font-size:9px;line-height:12px;letter-spacing:-0.356px;color:#333;">Calibri Light (Headings)</div>
</div>
<svg class="a" style="left:422.4px;top:168.2px" width="3.6" height="2.2" viewBox="0 0 3.6 2.2"><path d="M0 0H3.6L1.8 2.2Z" fill="#555"/></svg>
<div class="t" style="left:431.2px;top:163.5px;font-size:8.4px;line-height:11px;letter-spacing:-0.672px;color:#333;">40</div>
<svg class="a" style="left:453.4px;top:168.2px" width="3.6" height="2.2" viewBox="0 0 3.6 2.2"><path d="M0 0H3.6L1.8 2.2Z" fill="#555"/></svg>
<div class="t" style="left:464.5px;top:162.9px;font-size:9.2px;line-height:12px;letter-spacing:0.363px;color:#333;">A</div>
<svg class="a" style="left:469.8px;top:163.4px" width="3.2" height="2.2" viewBox="0 0 3.2 2.2"><path d="M0 2.4L1.6 0L3.2 2.4Z" fill="#2a6fc9"/></svg>
<div class="t" style="left:480px;top:165.4px;font-size:7.2px;line-height:9px;letter-spacing:0.397px;color:#333;">A</div>
<svg class="a" style="left:484.6px;top:163.6px" width="3.2" height="2.2" viewBox="0 0 3.2 2.2"><path d="M0 0H3.2L1.6 2.4Z" fill="#2a6fc9"/></svg>
<svg class="a" style="left:498.6px;top:162.6px" width="10.6" height="11" viewBox="0 0 10.6 11"><path d="M5.4 5.6L8.6 2.4L10.4 4.4L7.2 7.8Z" fill="#ea6f86"/><path d="M5.4 5.6L7.2 7.8L5.4 9.8L3.2 9.4L2.6 7.6Z" fill="#ea6f86"/><path d="M3.4 7.2L5.2 9.2" stroke="#fff" stroke-width="0.9"/><path d="M0.7 5.4L2.4 0.8L4.1 5.4M1.3 3.8H3.5" fill="none" stroke="#444" stroke-width="0.9"/></svg>
<div class="t" style="left:344.4px;top:184.1px;font-size:8.2px;line-height:11px;letter-spacing:-1.122px;color:#333;font-weight:bold;">B</div>
<div class="t" style="left:360.4px;top:183.4px;font-size:9.4px;line-height:12px;letter-spacing:0.389px;color:#3a3a3a;font-style:italic;font-family:'Liberation Serif',serif;font-weight:bold;">I</div>
<div class="t" style="left:374px;top:183.2px;font-size:9px;line-height:12px;letter-spacing:-1.300px;color:#3a3a3a;text-decoration:underline;">U</div>
<div class="t" style="left:389.6px;top:183.6px;font-size:9.4px;line-height:12px;letter-spacing:-1.070px;color:#3a3a3a;text-shadow:0.8px 0.8px 0.5px #999;">S</div>
<div class="t" style="left:401.2px;top:184.9px;font-size:7.2px;line-height:9px;letter-spacing:-0.270px;color:#333;text-decoration:line-through;text-decoration-color:#888;">abc</div>
<div class="t" style="left:417px;top:182.4px;font-size:7.6px;line-height:10px;letter-spacing:0.013px;color:#333;">AV</div>
<svg class="a" style="left:417px;top:191px" width="9.8" height="3" viewBox="0 0 9.8 3"><path d="M0.6 1.5H9.2M2 0.2L0.5 1.5L2 2.8M7.8 0.2L9.3 1.5L7.8 2.8" fill="none" stroke="#2a6fc9" stroke-width="0.8"/></svg>
<svg class="a" style="left:429.8px;top:188.8px" width="3.6" height="2.2" viewBox="0 0 3.6 2.2"><path d="M0 0H3.6L1.8 2.2Z" fill="#555"/></svg>
<div class="t" style="left:438.4px;top:183.9px;font-size:8.8px;line-height:11px;letter-spacing:-0.282px;color:#3c3c3c;">Aa</div>
<svg class="a" style="left:452px;top:188.8px" width="3.6" height="2.2" viewBox="0 0 3.6 2.2"><path d="M0 0H3.6L1.8 2.2Z" fill="#555"/></svg>
<div class="t" style="left:467px;top:182.7px;font-size:6.6px;line-height:9px;letter-spacing:-0.471px;color:#3a3a3a;">ab</div>
<svg class="a" style="left:470.4px;top:184px" width="7.4" height="7.4" viewBox="0 0 7.4 7.4"><path d="M1 7L6.8 0.4" stroke="#4a4a4a" stroke-width="1.2"/></svg>
<div class="a" style="left:467px;top:192px;width:11px;height:2.8px;background:#fff200"></div>
<svg class="a" style="left:481.8px;top:188.8px" width="3.6" height="2.2" viewBox="0 0 3.6 2.2"><path d="M0 0H3.6L1.8 2.2Z" fill="#555"/></svg>
<div class="t" style="left:492.2px;top:182.5px;font-size:9px;line-height:12px;letter-spacing:0.597px;color:#2e2e2e;">A</div>
<div class="a" style="left:489.8px;top:192px;width:11.2px;height:2.8px;background:#1f3f94"></div>
<svg class="a" style="left:504.8px;top:188.8px" width="3.6" height="2.2" viewBox="0 0 3.6 2.2"><path d="M0 0H3.6L1.8 2.2Z" fill="#555"/></svg>
<div class="t" style="left:411.8px;top:204.8px;font-size:8.4px;line-height:11px;letter-spacing:-0.252px;color:#5a5a5a;">Font</div>
<svg class="a" style="left:506.4px;top:208.2px" width="4.8" height="4.8" viewBox="0 0 4.8 4.8"><path d="M0.4 3.2V0.4H3.2" fill="none" stroke="#777" stroke-width="0.8"/><path d="M1.8 1.8L4.2 4.2M4.4 2.2V4.4H2.2" fill="none" stroke="#777" stroke-width="0.8"/></svg>
<svg class="a" style="left:519.2px;top:157.6px" width="9.8" height="10" viewBox="0 0 9.8 10"><circle cx="1" cy="1.4" r="0.95" fill="#2a6fc9"/><circle cx="1" cy="5" r="0.95" fill="#2a6fc9"/><circle cx="1" cy="8.6" r="0.95" fill="#2a6fc9"/><path d="M3.2 1.4H9.6" stroke="#7a7a7a" stroke-width="0.9"/><path d="M3.2 5H9.6" stroke="#7a7a7a" stroke-width="0.9"/><path d="M3.2 8.6H9.6" stroke="#7a7a7a" stroke-width="0.9"/></svg>
<svg class="a" style="left:533.8px;top:162px" width="3.6" height="2.2" viewBox="0 0 3.6 2.2"><path d="M0 0H3.6L1.8 2.2Z" fill="#555"/></svg>
<svg class="a" style="left:542.2px;top:157.6px" width="9.8" height="10" viewBox="0 0 9.8 10"><rect x="0.2" y="0.3" width="1.2" height="2.2" fill="#2a6fc9"/><rect x="0.2" y="3.9" width="1.2" height="2.2" fill="#2a6fc9"/><rect x="0.2" y="7.5" width="1.2" height="2.2" fill="#2a6fc9"/><path d="M3.2 1.4H9.6" stroke="#7a7a7a" stroke-width="0.9"/><path d="M3.2 5H9.6" stroke="#7a7a7a" stroke-width="0.9"/><path d="M3.2 8.6H9.6" stroke="#7a7a7a" stroke-width="0.9"/></svg>
<svg class="a" style="left:556.6px;top:162px" width="3.6" height="2.2" viewBox="0 0 3.6 2.2"><path d="M0 0H3.6L1.8 2.2Z" fill="#555"/></svg>
<svg class="a" style="left:571.2px;top:157.4px" width="9.8" height="10.4" viewBox="0 0 9.8 10.4"><path d="M2 1V9.4M0.3 2.6L2 0.6L3.7 2.6M0.3 7.8L2 9.8L3.7 7.8" fill="none" stroke="#2a6fc9" stroke-width="1"/><path d="M5 2H9.6" stroke="#9a9a9a" stroke-width="0.9"/><path d="M5 4.2H9.6" stroke="#9a9a9a" stroke-width="0.9"/><path d="M5 6.4H9.6" stroke="#9a9a9a" stroke-width="0.9"/><path d="M5 8.6H9.6" stroke="#9a9a9a" stroke-width="0.9"/></svg>
<svg class="a" style="left:584.4px;top:162px" width="3.6" height="2.2" viewBox="0 0 3.6 2.2"><path d="M0 0H3.6L1.8 2.2Z" fill="#555"/></svg>
<svg class="a" style="left:592.8px;top:157.6px" width="11.6" height="10.2" viewBox="0 0 11.6 10.2"><path d="M0.8 0.4V9.6M2.8 0.4V9.6M4.8 0.4V9.6" stroke="#555" stroke-width="0.9"/><path d="M0 7.6L0.8 9.8L1.6 7.6M2 7.6L2.8 9.8L3.6 7.6M4 7.6L4.8 9.8L5.6 7.6" fill="none" stroke="#555" stroke-width="0.6"/><path d="M6.4 6L8.6 0.6L10.8 6M7.2 4.2H10" fill="none" stroke="#2a6fc9" stroke-width="1"/><path d="M8.6 7V9.8" stroke="#555" stroke-width="0.9"/></svg>
<svg class="a" style="left:606.8px;top:162px" width="3.6" height="2.2" viewBox="0 0 3.6 2.2"><path d="M0 0H3.6L1.8 2.2Z" fill="#555"/></svg>
<svg class="a" style="left:519.2px;top:173.6px" width="10.4" height="9.4" viewBox="0 0 10.4 9.4"><path d="M0 0.6H10.4" stroke="#b5b5b5" stroke-width="0.9"/><path d="M0 8.8H10.4" stroke="#b5b5b5" stroke-width="0.9"/><path d="M5 3.2H10.4" stroke="#b5b5b5" stroke-width="0.9"/><path d="M5 5.8H10.4" stroke="#b5b5b5" stroke-width="0.9"/><path d="M4 4.5H0.6M2.2 2.8L0.5 4.5L2.2 6.2" fill="none" stroke="#a8a8a8" stroke-width="0.8"/></svg>
<svg class="a" style="left:534.2px;top:173.6px" width="10.4" height="9.4" viewBox="0 0 10.4 9.4"><path d="M0 0.6H10.4" stroke="#b5b5b5" stroke-width="0.9"/><path d="M0 8.8H10.4" stroke="#b5b5b5" stroke-width="0.9"/><path d="M5 3.2H10.4" stroke="#b5b5b5" stroke-width="0.9"/><path d="M5 5.8H10.4" stroke="#b5b5b5" stroke-width="0.9"/><path d="M0.4 4.5H3.8M2.2 2.8L3.9 4.5L2.2 6.2" fill="none" stroke="#a8a8a8" stroke-width="0.8"/></svg>
<svg class="a" style="left:555px;top:174.4px" width="9.2" height="8" viewBox="0 0 9.2 8"><path d="M0 0.6H4" stroke="#2a6fc9" stroke-width="0.9"/><path d="M0 2.9H4" stroke="#2a6fc9" stroke-width="0.9"/><path d="M0 5.2H4" stroke="#2a6fc9" stroke-width="0.9"/><path d="M0 7.5H4" stroke="#2a6fc9" stroke-width="0.9"/><path d="M5.2 0.6H9.2" stroke="#2a6fc9" stroke-width="0.9"/><path d="M5.2 2.9H9.2" stroke="#2a6fc9" stroke-width="0.9"/><path d="M5.2 5.2H9.2" stroke="#2a6fc9" stroke-width="0.9"/><path d="M5.2 7.5H9.2" stroke="#2a6fc9" stroke-width="0.9"/></svg>
<svg class="a" style="left:568.4px;top:177.6px" width="3.6" height="2.2" viewBox="0 0 3.6 2.2"><path d="M0 0H3.6L1.8 2.2Z" fill="#555"/></svg>
<svg class="a" style="left:593px;top:173.4px" width="11" height="10" viewBox="0 0 11 10"><path d="M0.5 2.4V0.5H10.5V2.4M0.5 7.6V9.5H10.5V7.6" fill="none" stroke="#555" stroke-width="0.9"/><path d="M2.4 4H8.6M2.4 6H8.6" stroke="#777" stroke-width="0.7"/><path d="M4.2 2.6L5.5 1L6.8 2.6Z M4.2 7.4L5.5 9L6.8 7.4Z" fill="#2a6fc9"/></svg>
<svg class="a" style="left:606.8px;top:177.6px" width="3.6" height="2.2" viewBox="0 0 3.6 2.2"><path d="M0 0H3.6L1.8 2.2Z" fill="#555"/></svg>
<div class="a" style="left:532px;top:186.8px;width:14.8px;height:15px;background:#c8c8c8"></div>
<svg class="a" style="left:519.6px;top:189.8px" width="9.6" height="8.8" viewBox="0 0 9.6 8.8"><path d="M0 0.5H9.6" stroke="#7a7a7a" stroke-width="0.9"/><path d="M0 5.6H9.6" stroke="#7a7a7a" stroke-width="0.9"/><path d="M0 3H6.4" stroke="#7a7a7a" stroke-width="0.9"/><path d="M0 8.2H6.4" stroke="#7a7a7a" stroke-width="0.9"/></svg>
<svg class="a" style="left:534.6px;top:189.8px" width="9.6" height="8.8" viewBox="0 0 9.6 8.8"><path d="M0 0.5H9.6" stroke="#7a7a7a" stroke-width="0.9"/><path d="M0 5.6H9.6" stroke="#7a7a7a" stroke-width="0.9"/><path d="M1.6 3H8" stroke="#7a7a7a" stroke-width="0.9"/><path d="M1.6 8.2H8" stroke="#7a7a7a" stroke-width="0.9"/></svg>
<svg class="a" style="left:549.4px;top:189.8px" width="9.6" height="8.8" viewBox="0 0 9.6 8.8"><path d="M0 0.5H9.6" stroke="#7a7a7a" stroke-width="0.9"/><path d="M0 5.6H9.6" stroke="#7a7a7a" stroke-width="0.9"/><path d="M3.2 3H9.6" stroke="#7a7a7a" stroke-width="0.9"/><path d="M3.2 8.2H9.6" stroke="#7a7a7a" stroke-width="0.9"/></svg>
<svg class="a" style="left:564.2px;top:189.8px" width="9.6" height="8.8" viewBox="0 0 9.6 8.8"><path d="M0 0.5H9.6" stroke="#7a7a7a" stroke-width="0.9"/><path d="M0 3H9.6" stroke="#7a7a7a" stroke-width="0.9"/><path d="M0 5.6H9.6" stroke="#7a7a7a" stroke-width="0.9"/><path d="M0 8.2H9.6" stroke="#7a7a7a" stroke-width="0.9"/></svg>
<svg class="a" style="left:593px;top:188.8px" width="11.4" height="10.6" viewBox="0 0 11.4 10.6"><path d="M0.4 4.2L2 0.6H8.6L10.2 4.2Z" fill="#3a9a6a"/><path d="M1.2 4.2V6.6H3.4" fill="none" stroke="#3a9a6a" stroke-width="1"/><rect x="4" y="4.6" width="6.6" height="5.6" fill="#fff" stroke="#666" stroke-width="0.9"/><path d="M4 6.4H10.6" stroke="#666" stroke-width="0.7"/></svg>
<svg class="a" style="left:606.8px;top:193px" width="3.6" height="2.2" viewBox="0 0 3.6 2.2"><path d="M0 0H3.6L1.8 2.2Z" fill="#555"/></svg>
<div class="t" style="left:542px;top:204.8px;font-size:8.4px;line-height:11px;letter-spacing:-0.403px;color:#5a5a5a;">Paragraph</div>
<svg class="a" style="left:609px;top:208.2px" width="4.8" height="4.8" viewBox="0 0 4.8 4.8"><path d="M0.4 3.2V0.4H3.2" fill="none" stroke="#777" stroke-width="0.8"/><path d="M1.8 1.8L4.2 4.2M4.4 2.2V4.4H2.2" fill="none" stroke="#777" stroke-width="0.8"/></svg>
<svg class="a" style="left:622.8px;top:157.8px" width="21.6" height="19.8" viewBox="0 0 21.6 19.8"><rect x="0.6" y="2.6" width="10" height="10" fill="#f3f3f3" stroke="#4a86c8" stroke-width="1"/><circle cx="14" cy="7" r="6.6" fill="#f3f3f3" stroke="#4a86c8" stroke-width="1"/><path d="M9.4 6.6L15.8 13L9.4 19.4L3 13Z" fill="#fff" stroke="#4a86c8" stroke-width="1"/></svg>
<div class="t" style="left:621px;top:181.1px;font-size:8.4px;line-height:11px;letter-spacing:-0.582px;color:#444;">Shapes</div>
<svg class="a" style="left:631.8px;top:196.2px" width="3.6" height="2.2" viewBox="0 0 3.6 2.2"><path d="M0 0H3.6L1.8 2.2Z" fill="#555"/></svg>
<svg class="a" style="left:653.6px;top:158.4px" width="19.6" height="18.8" viewBox="0 0 19.6 18.8"><rect x="9.1" y="3.3" width="7" height="6.3" fill="#f1c373"/><rect x="3.7" y="8.8" width="5.8" height="6" fill="#f1c373"/><rect x="0.5" y="0.6" width="7.6" height="7.2" fill="#fff" stroke="#777" stroke-width="0.9"/><rect x="10.3" y="10.8" width="8.4" height="7.5" fill="#fff" stroke="#777" stroke-width="0.9"/></svg>
<div class="t" style="left:649.4px;top:181.1px;font-size:8.4px;line-height:11px;letter-spacing:-0.241px;color:#444;">Arrange</div>
<svg class="a" style="left:661.8px;top:196.2px" width="3.6" height="2.2" viewBox="0 0 3.6 2.2"><path d="M0 0H3.6L1.8 2.2Z" fill="#555"/></svg>
<svg class="a" style="left:684.6px;top:158.2px" width="20.8" height="20" viewBox="0 0 20.8 20"><rect x="0.9" y="1.1" width="16.5" height="18.2" rx="4.4" fill="#fff" stroke="#8a8a8a" stroke-width="0.9"/><path d="M20.2 6.2L15 13" stroke="#6a6a6a" stroke-width="1.7"/><path d="M15.6 12.2L14 14.2" stroke="#9a9a9a" stroke-width="2.2"/><path d="M14.6 13.4C12.6 13.6 11.4 14.8 10.6 16.4C9.8 18 8.4 18.8 7 19C9.6 20 13 19.6 14.6 17.4C15.4 16.2 15.6 14.6 14.6 13.4Z" fill="#2f74c8"/></svg>
<div class="t" style="left:683.6px;top:181.1px;font-size:8.4px;line-height:11px;letter-spacing:-0.094px;color:#444;">Quick</div>
<div class="t" style="left:680.8px;top:191.8px;font-size:8.4px;line-height:11px;letter-spacing:-0.346px;color:#444;">Styles</div>
<svg class="a" style="left:703.8px;top:196.4px" width="3.6" height="2.2" viewBox="0 0 3.6 2.2"><path d="M0 0H3.6L1.8 2.2Z" fill="#555"/></svg>
<svg class="a" style="left:711.2px;top:157.4px" width="11" height="10.8" viewBox="0 0 11 10.8"><path d="M3.4 3.4L6.6 1.6L9.4 5.6L5 8Z" fill="#fff" stroke="#555" stroke-width="0.8"/><path d="M4.8 0.4C3.6 0.8 3.6 2.4 4.4 3.2" fill="none" stroke="#555" stroke-width="0.7"/><path d="M9.6 5.8C10.4 6.8 10.6 7.4 10.2 8C9.6 8.4 9 7.8 9.6 5.8Z" fill="#2a6fc9"/><rect x="0.2" y="8.6" width="10.4" height="2.2" fill="#ed6c2f"/></svg>
<svg class="a" style="left:725.2px;top:162px" width="3.6" height="2.2" viewBox="0 0 3.6 2.2"><path d="M0 0H3.6L1.8 2.2Z" fill="#555"/></svg>
<svg class="a" style="left:711.2px;top:172.8px" width="11" height="10.6" viewBox="0 0 11 10.6"><path d="M0.6 0.6H7M0.6 0.6V7" fill="none" stroke="#555" stroke-width="0.9"/><path d="M9.2 0.6L10.6 2L5 7.6L3.2 8L3.6 6.2Z" fill="#2a6fc9"/><rect x="0.2" y="8.4" width="10.4" height="2.2" fill="#6a6a6a"/></svg>
<svg class="a" style="left:725.2px;top:177.4px" width="3.6" height="2.2" viewBox="0 0 3.6 2.2"><path d="M0 0H3.6L1.8 2.2Z" fill="#555"/></svg>
<svg class="a" style="left:711.2px;top:189px" width="11.2" height="10" viewBox="0 0 11.2 10"><path d="M3 1.2H10.4L8.4 6.8H1Z" fill="#fff" stroke="#666" stroke-width="0.9"/><path d="M1 6.8L1.6 9.4H8.6L10.8 3.6L10.4 1.2L8.4 6.8Z" fill="#8a8a8a"/></svg>
<svg class="a" style="left:724.6px;top:193px" width="3.6" height="2.2" viewBox="0 0 3.6 2.2"><path d="M0 0H3.6L1.8 2.2Z" fill="#555"/></svg>
<div class="t" style="left:655.6px;top:204.8px;font-size:8.4px;line-height:11px;letter-spacing:-0.173px;color:#5a5a5a;">Drawing</div>
<svg class="a" style="left:728px;top:208.2px" width="4.8" height="4.8" viewBox="0 0 4.8 4.8"><path d="M0.4 3.2V0.4H3.2" fill="none" stroke="#777" stroke-width="0.8"/><path d="M1.8 1.8L4.2 4.2M4.4 2.2V4.4H2.2" fill="none" stroke="#777" stroke-width="0.8"/></svg>
<div class="a" style="left:740.4px;top:156.4px;width:19.8px;height:20.2px;background:#fbfbfb;border:1px solid #d6d6d6"></div>
<svg class="a" style="left:745px;top:160.6px" width="10.6" height="10.8" viewBox="0 0 10.6 10.8"><circle cx="6.4" cy="4" r="3" fill="none" stroke="#2a6fc9" stroke-width="1.3"/><path d="M4.2 6.2L0.8 9.8" stroke="#2a6fc9" stroke-width="1.5"/></svg>
<div class="t" style="left:737.6px;top:180.1px;font-size:8.4px;line-height:11px;letter-spacing:-0.126px;color:#444;">Editing</div>
<svg class="a" style="left:748.4px;top:195.2px" width="3.6" height="2.2" viewBox="0 0 3.6 2.2"><path d="M0 0H3.6L1.8 2.2Z" fill="#555"/></svg>
<svg class="a" style="left:779.8px;top:207.8px" width="7" height="4.4" viewBox="0 0 7 4.4"><path d="M0.5 3.9L3.5 0.8L6.5 3.9" fill="none" stroke="#555" stroke-width="1.1"/></svg>
<div class="a" style="left:326px;top:217.4px;width:1px;height:345.6px;background:#cfcfcf"></div>
<div class="t" style="left:230.2px;top:225.6px;font-size:10.6px;line-height:14px;letter-spacing:-0.695px;color:#3a3a3a;">1</div>
<div class="t" style="left:230.2px;top:275.4px;font-size:10.6px;line-height:14px;letter-spacing:-0.695px;color:#3a3a3a;">2</div>
<div class="t" style="left:230.2px;top:325.4px;font-size:10.6px;line-height:14px;letter-spacing:-0.695px;color:#3a3a3a;">3</div>
<div class="t" style="left:230.2px;top:375.4px;font-size:10.6px;line-height:14px;letter-spacing:-0.495px;color:#c9421f;">4</div>
<div class="a" style="left:245.2px;top:228px;width:65.5px;height:39px;background:#fff;border:1px solid #d0d0d0"></div>
<div class="a" style="left:245.2px;top:278px;width:65.5px;height:39px;background:#fff;border:1px solid #d0d0d0"></div>
<div class="a" style="left:245.2px;top:328.2px;width:65.5px;height:39px;background:#fff;border:1px solid #d0d0d0"></div>
<div class="t" style="left:252.4px;top:243.7px;font-size:3px;line-height:4px;letter-spacing:0.185px;color:#4a5a8c;">Sales Trends by Product Category</div>
<div class="t" style="left:267px;top:283.5px;font-size:2.5px;line-height:3px;letter-spacing:-0.040px;color:#222;">Top Selling Products</div>
<div class="a" style="left:257px;top:289px;width:42px;height:21.6px;background:#d5dde8"></div>
<svg class="a" style="left:268px;top:290.6px" width="20" height="18" viewBox="0 0 20 18"><path d="M4 1.6H16M4 7.4H16" stroke="#555" stroke-width="0.4"/><path d="M4.4 7L7 4.4L9 5.4L11.6 3.4L13.6 3.8L16.2 1.2" fill="none" stroke="#222" stroke-width="1"/><circle cx="5.2" cy="13" r="3.6" fill="#c4cbd4" stroke="#555" stroke-width="0.8"/><path d="M5.2 13V10.4M5.2 13L7.4 14.4" stroke="#555" stroke-width="0.5"/><rect x="11.6" y="9.6" width="6" height="7" fill="#8a8f96"/><path d="M11.6 11.4H17.6M11.6 13.2H17.6M11.6 15H17.6" stroke="#b9bec6" stroke-width="0.4"/><path d="M7.4 8.4L13.4 11.8" stroke="#d0443a" stroke-width="0.5"/></svg>
<div class="t" style="left:260px;top:333.5px;font-size:2.5px;line-height:3px;letter-spacing:-0.048px;color:#222;">Sales by Category: 2014 vs. 2013</div>
<div class="a" style="left:250.8px;top:340.6px;width:8px;height:1.5px;background:#3d85d6"></div>
<div class="a" style="left:278px;top:338px;width:29px;height:24.6px;background:#d5dde8;border:0.8px solid #858a92"></div>
<svg class="a" style="left:283.6px;top:340.6px" width="18" height="18" viewBox="0 0 18 18"><rect x="1.4" y="3.4" width="13.4" height="14" fill="#4e555e"/><rect x="6" y="1" width="4.6" height="5" fill="#5e656e"/><path d="M1 2.4H15.6" stroke="#222" stroke-width="0.9"/><path d="M4.6 6V16M8 7V17M11.4 8V17M2 9.6H14M2 13H14" stroke="#a9b1bb" stroke-width="0.5"/><path d="M3 4.6L15 16.6" stroke="#d0443a" stroke-width="0.5"/></svg>
<div class="a" style="left:243.8px;top:376.8px;width:68.6px;height:41.6px;background:#fff;border:2px solid #f05a2c"></div>
<div class="t" style="left:261.4px;top:381.7px;font-size:2.2px;line-height:3px;letter-spacing:0.078px;color:#44558c;">Sales Trends: &lt;CategoryName&gt;</div>
<div class="t" style="left:276.4px;top:387.6px;font-size:1.4px;line-height:2px;letter-spacing:-0.020px;color:#666;">Sales</div>
<div class="a" style="left:258.6px;top:390.2px;width:39.6px;height:0.45px;background:#d9d9d9"></div>
<div class="a" style="left:258.6px;top:391.98px;width:39.6px;height:0.45px;background:#d9d9d9"></div>
<div class="a" style="left:258.6px;top:393.76px;width:39.6px;height:0.45px;background:#d9d9d9"></div>
<div class="a" style="left:258.6px;top:395.54px;width:39.6px;height:0.45px;background:#d9d9d9"></div>
<div class="a" style="left:258.6px;top:397.32px;width:39.6px;height:0.45px;background:#d9d9d9"></div>
<div class="a" style="left:258.6px;top:399.1px;width:39.6px;height:0.45px;background:#d9d9d9"></div>
<div class="a" style="left:258.6px;top:400.88px;width:39.6px;height:0.45px;background:#d9d9d9"></div>
<div class="a" style="left:258.6px;top:402.66px;width:39.6px;height:0.45px;background:#d9d9d9"></div>
<div class="a" style="left:258.6px;top:404.44px;width:39.6px;height:0.45px;background:#d9d9d9"></div>
<div class="a" style="left:258.6px;top:406.22px;width:39.6px;height:0.45px;background:#d9d9d9"></div>
<div class="a" style="left:258.6px;top:408px;width:39.6px;height:0.45px;background:#d9d9d9"></div>
<div class="a" style="left:257px;top:390px;width:0.5px;height:18.4px;background:#e4e4e4"></div>
<div class="t" style="left:275px;top:409.1px;font-size:1px;line-height:1px;letter-spacing:-0.106px;color:#777;">&lt;YearMonthNum&gt;</div>
<div class="t" style="left:277px;top:410.7px;font-size:1px;line-height:1px;letter-spacing:0.020px;color:#777;">Sales</div>
<div class="a" style="left:333.8px;top:263px;width:442.4px;height:250px;background:#fff;border:1px solid #d8d8d8"></div>
<div class="a" style="left:364.4px;top:277.2px;width:381.4px;height:1px;background:repeating-linear-gradient(90deg,#8c8c8c 0,#8c8c8c 1.1px,transparent 1.1px,transparent 2.2px)"></div>
<div class="a" style="left:364.4px;top:311px;width:381.4px;height:1px;background:repeating-linear-gradient(90deg,#8c8c8c 0,#8c8c8c 1.1px,transparent 1.1px,transparent 2.2px)"></div>
<div class="a" style="left:363.9px;top:277.2px;width:1px;height:34.6px;background:repeating-linear-gradient(180deg,#8c8c8c 0,#8c8c8c 1.1px,transparent 1.1px,transparent 2.2px)"></div>
<div class="a" style="left:745.3px;top:277.2px;width:1px;height:34.6px;background:repeating-linear-gradient(180deg,#8c8c8c 0,#8c8c8c 1.1px,transparent 1.1px,transparent 2.2px)"></div>
<div class="t" style="left:441.9px;top:273.2px;font-size:16.4px;line-height:21px;letter-spacing:-0.552px;color:#1f3d8a;text-shadow:none;">Sales Trends:</div>
<div class="t" style="left:540.8px;top:273.2px;font-size:16.4px;line-height:21px;letter-spacing:-0.161px;color:#2e4f9b;text-shadow:none;">&lt;CategoryName&gt;</div>
<div class="a" style="left:554.9px;top:260.4px;width:1px;height:14.4px;background:#a4a4a4"></div>
<svg class="a" style="left:548px;top:246px" width="19" height="16" viewBox="0 0 19 16"><path d="M10.96 12.78A6.2 6.2 0 1 1 13.5 6.6L17.9 6.3L13.3 11.9L10.26 7.2A2.9 2.9 0 1 0 9.06 10.08Z" fill="#fff" stroke="#7c7c7c" stroke-width="1" stroke-linejoin="round"/></svg>
<div class="a" style="left:360.6px;top:273.8px;width:7.6px;height:7.6px;background:#fff;border:1.2px solid #6a6a6a;border-radius:50%"></div>
<div class="a" style="left:360.6px;top:290.7px;width:7.6px;height:7.6px;background:#fff;border:1.2px solid #6a6a6a;border-radius:50%"></div>
<div class="a" style="left:360.6px;top:307.7px;width:7.6px;height:7.6px;background:#fff;border:1.2px solid #6a6a6a;border-radius:50%"></div>
<div class="a" style="left:551.8px;top:273.8px;width:7.6px;height:7.6px;background:#fff;border:1.2px solid #6a6a6a;border-radius:50%"></div>
<div class="a" style="left:551.8px;top:307.7px;width:7.6px;height:7.6px;background:#fff;border:1.2px solid #6a6a6a;border-radius:50%"></div>
<div class="a" style="left:742px;top:273.8px;width:7.6px;height:7.6px;background:#fff;border:1.2px solid #6a6a6a;border-radius:50%"></div>
<div class="a" style="left:742px;top:290.7px;width:7.6px;height:7.6px;background:#fff;border:1.2px solid #6a6a6a;border-radius:50%"></div>
<div class="a" style="left:742px;top:307.7px;width:7.6px;height:7.6px;background:#fff;border:1.2px solid #6a6a6a;border-radius:50%"></div>
<div class="a" style="left:341.2px;top:297px;width:14.2px;height:14.2px;background:#fafafa;border:1px solid #b9b9b9"></div>
<svg class="a" style="left:343.6px;top:299.2px" width="9.6" height="10" viewBox="0 0 9.6 10"><path d="M0.4 5H9.2" stroke="#8a8a8a" stroke-width="1"/><path d="M4.8 0.4V3.6M3.4 2.2L4.8 3.8L6.2 2.2M4.8 9.6V6.4M3.4 7.8L4.8 6.2L6.2 7.8" fill="none" stroke="#2a7bf0" stroke-width="1.1"/></svg>
<div class="t" style="left:546px;top:323.4px;font-size:7.6px;line-height:10px;letter-spacing:-0.162px;color:#333;">Sales</div>
<div class="a" style="left:423px;top:339px;width:274.4px;height:1px;background:#dcdcdc"></div>
<div class="t" style="left:415.452px;top:336.6px;font-size:5.3px;line-height:7px;letter-spacing:0.000px;color:#4a4a4a;text-shadow:none;">1</div>
<div class="a" style="left:423px;top:351px;width:274.4px;height:1px;background:#dcdcdc"></div>
<div class="t" style="left:411.032px;top:348.82px;font-size:5.3px;line-height:7px;letter-spacing:0.000px;color:#4a4a4a;text-shadow:none;">0,9</div>
<div class="a" style="left:423px;top:364px;width:274.4px;height:1px;background:#dcdcdc"></div>
<div class="t" style="left:411.032px;top:361.04px;font-size:5.3px;line-height:7px;letter-spacing:0.000px;color:#4a4a4a;text-shadow:none;">0,8</div>
<div class="a" style="left:423px;top:376px;width:274.4px;height:1px;background:#dcdcdc"></div>
<div class="t" style="left:411.032px;top:373.26px;font-size:5.3px;line-height:7px;letter-spacing:0.000px;color:#4a4a4a;text-shadow:none;">0,7</div>
<div class="a" style="left:423px;top:388px;width:274.4px;height:1px;background:#dcdcdc"></div>
<div class="t" style="left:411.032px;top:385.48px;font-size:5.3px;line-height:7px;letter-spacing:0.000px;color:#4a4a4a;text-shadow:none;">0,6</div>
<div class="a" style="left:423px;top:400px;width:274.4px;height:1px;background:#dcdcdc"></div>
<div class="t" style="left:411.032px;top:397.7px;font-size:5.3px;line-height:7px;letter-spacing:0.000px;color:#4a4a4a;text-shadow:none;">0,5</div>
<div class="a" style="left:423px;top:412px;width:274.4px;height:1px;background:#dcdcdc"></div>
<div class="t" style="left:411.032px;top:409.92px;font-size:5.3px;line-height:7px;letter-spacing:0.000px;color:#4a4a4a;text-shadow:none;">0,4</div>
<div class="a" style="left:423px;top:425px;width:274.4px;height:1px;background:#dcdcdc"></div>
<div class="t" style="left:411.032px;top:422.14px;font-size:5.3px;line-height:7px;letter-spacing:0.000px;color:#4a4a4a;text-shadow:none;">0,3</div>
<div class="a" style="left:423px;top:437px;width:274.4px;height:1px;background:#dcdcdc"></div>
<div class="t" style="left:411.032px;top:434.36px;font-size:5.3px;line-height:7px;letter-spacing:0.000px;color:#4a4a4a;text-shadow:none;">0,2</div>
<div class="a" style="left:423px;top:449px;width:274.4px;height:1px;background:#dcdcdc"></div>
<div class="t" style="left:411.032px;top:446.58px;font-size:5.3px;line-height:7px;letter-spacing:0.000px;color:#4a4a4a;text-shadow:none;">0,1</div>
<div class="a" style="left:423px;top:461px;width:274.4px;height:1px;background:#dcdcdc"></div>
<div class="t" style="left:415.452px;top:458.8px;font-size:5.3px;line-height:7px;letter-spacing:0.000px;color:#4a4a4a;text-shadow:none;">0</div>
<div class="t" style="left:539.4px;top:466.2px;font-size:5px;line-height:6px;letter-spacing:0.072px;color:#4a4a4a;text-shadow:none;">&lt;YearMonthNum&gt;</div>
<div class="a" style="left:548.6px;top:478.2px;width:2.2px;height:2.4px;background:#2f7fd6"></div>
<div class="t" style="left:552.4px;top:476.4px;font-size:5px;line-height:6px;letter-spacing:-0.182px;color:#4a4a4a;text-shadow:none;">Sales</div>
<div class="a" style="left:781.6px;top:218.6px;width:10.4px;height:306px;background:#d4d4d4"></div>
<div class="a" style="left:781.6px;top:218.6px;width:10.4px;height:8.6px;background:#fff;border:1px solid #ababab"></div>
<svg class="a" style="left:784.4px;top:221px" width="4.8" height="3.2" viewBox="0 0 4.8 3.2"><path d="M0 3.2L2.4 0L4.8 3.2Z" fill="#555"/></svg>
<div class="a" style="left:781.6px;top:443px;width:10.4px;height:70.6px;background:#fff;border:1px solid #ababab"></div>
<div class="a" style="left:781.6px;top:514.2px;width:10.4px;height:10.4px;background:#fff;border:1px solid #ababab"></div>
<svg class="a" style="left:784.4px;top:518px" width="4.8" height="3.2" viewBox="0 0 4.8 3.2"><path d="M0 0H4.8L2.4 3.2Z" fill="#555"/></svg>
<svg class="a" style="left:784.2px;top:527.4px" width="5.4" height="6.6" viewBox="0 0 5.4 6.6"><path d="M0 3L2.7 0L5.4 3Z M0 6.4L2.7 3.4L5.4 6.4Z" fill="#555"/></svg>
<svg class="a" style="left:784.2px;top:538.8px" width="5.4" height="6.6" viewBox="0 0 5.4 6.6"><path d="M0 0H5.4L2.7 3Z M0 3.4H5.4L2.7 6.4Z" fill="#555"/></svg>
<div class="a" style="left:792.1px;top:107px;width:2.2px;height:459.5px;background:#e9e3e1"></div>
<div class="a" style="left:792.1px;top:107px;width:0.7px;height:455px;background:#cfcfcf"></div>
<div class="a" style="left:220px;top:562px;width:574.3px;height:4.5px;background:#ece8e7"></div>
<div class="a" style="left:220px;top:562px;width:572.8px;height:0.7px;background:#cfcfcf"></div>
<div class="a" style="left:220px;top:563.6px;width:573.4px;height:0.7px;background:#d2cfcf"></div>
<div class="a" style="left:3.3px;top:565.8px;width:791px;height:0.7px;background:#d5c9c6"></div>
<div class="a" style="left:799px;top:0px;width:1px;height:572px;background:#3d5668"></div>
<div class="a" style="left:0px;top:570.8px;width:800px;height:1.2px;background:#2c4152"></div>
</div>
</body>
</html>
